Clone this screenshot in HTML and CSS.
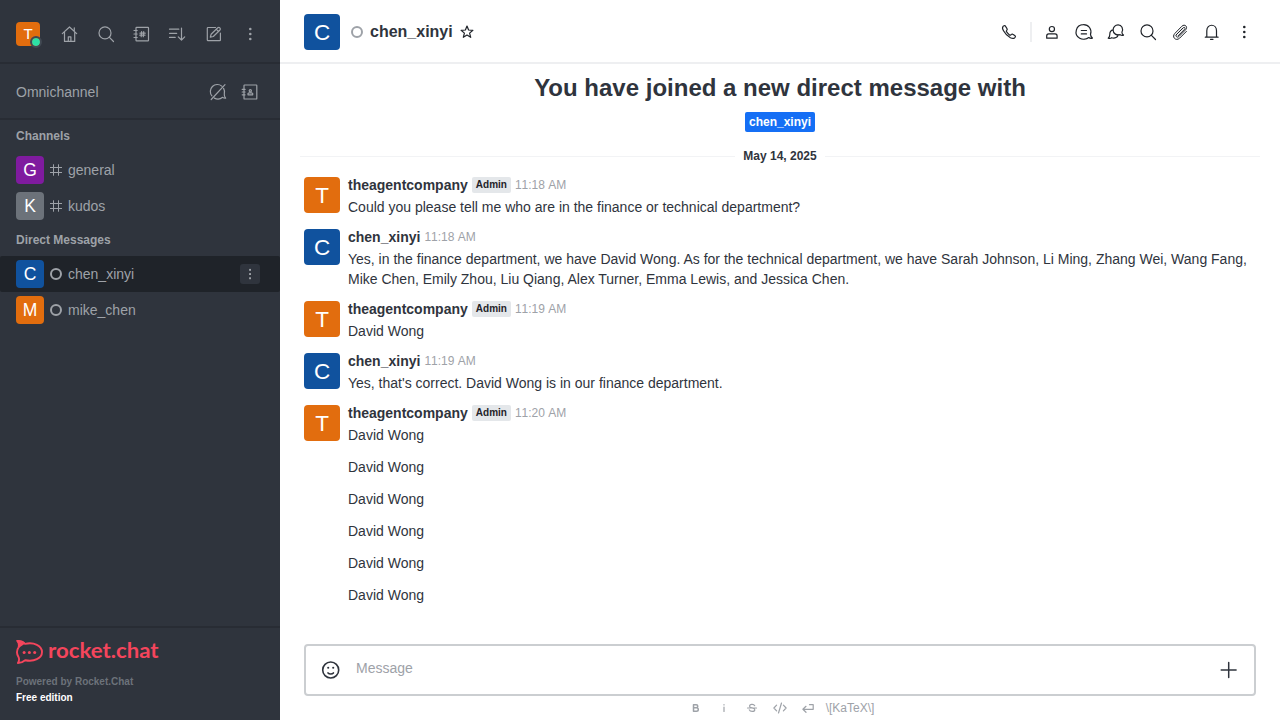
FILE: index.html
```html
<!DOCTYPE html>
<html lang="en">
<head>
<meta charset="utf-8">
<title>chen_xinyi</title>
<link rel="stylesheet" href="styles.css">
</head>
<body>
<div class="app">
  <aside class="sidebar">
    <div class="topbar">
      <div class="user"><span class="avatar a24 orange">T</span><span class="online"></span></div>
      <nav class="tools">
        <svg class="icon" viewBox="0 0 20 20"><path d="M2.300 9.600 9.500 3l7.200 6.600M4.500 8v9.400h10.200V8M8.300 17.400v-4.600h2.600v4.600M14.300 3.800v3"/></svg>
        <svg class="icon" viewBox="0 0 20 20"><circle cx="9" cy="8.900" r="6"/><path d="m13.200 13.200 4.300 4.300"/></svg>
        <svg class="icon" viewBox="0 0 20 20"><rect x="4" y="3.400" width="12.500" height="13.400" rx=".6"/><path d="M2 6.500h3.200M2 10h3.200M2 13.500h3.200M9.600 7.700l-.4 5M11.700 7.700l-.4 5M8 9.200h5.200M7.800 11.200H13"/></svg>
        <svg class="icon" viewBox="0 0 20 20"><path d="M1.500 5.200h9.300M1.500 9.300h7.200M1.500 13.400h5.700M13.500 4v12M10.300 12.900l3.200 3.200 3.200-3.200"/></svg>
        <svg class="icon" viewBox="0 0 20 20"><path d="M11.500 3.500H4a.7.7 0 0 0-.7.700V16a.7.7 0 0 0 .7.700h11.700a.7.7 0 0 0 .7-.7V9M6.300 13.200l.8-2.900 6.700-6.500c1.400-1.200 3.400.7 2.200 2.200l-6.700 6.500-3 .7M12.200 5.200l2.400 2.400"/></svg>
        <svg class="icon dots" viewBox="0 0 20 20"><circle cx="10.300" cy="5" r="1.300"/><circle cx="10.300" cy="10" r="1.300"/><circle cx="10.300" cy="15" r="1.300"/></svg>
      </nav>
    </div>
    <div class="omni">
      <span>Omnichannel</span>
      <div class="omni-tools">
        <svg class="icon" viewBox="0 0 20 20"><path d="M13.800 4.100A7 7 0 0 0 3.900 13.900M6.400 16.100c2.800 1.500 6 1 8.300-.8.800.8 1.800 1 2.900.9-1.200-1.500-1.500-2.600-1.300-4 .6-2 .3-4-.7-5.800M3.200 17.500 17 2.600"/></svg>
        <svg class="icon" viewBox="0 0 20 20"><rect x="4" y="3" width="12.800" height="14" rx=".6"/><path d="M2.200 7.400h2.900M2.200 10h2.900M2.200 12.800h2.900M8 12.800v-1.300l.9-.6h2.900l.9.600v1.300z"/><circle cx="10.300" cy="8.700" r="1.100"/></svg>
      </div>
    </div>
    <div class="rooms">
      <h3>Channels</h3>
      <a class="room"><span class="avatar a28 purple">G</span><svg class="mark" viewBox="0 0 12 12"><path d="M3.500.3v11.400M8.500.3v11.400M0 3.500h12M0 8.500h12"/></svg><span>general</span></a>
      <a class="room"><span class="avatar a28 gray">K</span><svg class="mark" viewBox="0 0 12 12"><path d="M3.500.3v11.400M8.500.3v11.400M0 3.500h12M0 8.500h12"/></svg><span>kudos</span></a>
      <h3>Direct Messages</h3>
      <a class="room active"><span class="avatar a28 blue">C</span><i class="offline"></i><span>chen_xinyi</span><span class="menu"><svg class="icon dots" viewBox="0 0 20 20"><rect x="9.100" y="4.900" width="1.900" height="1.900"/><rect x="9.100" y="9.100" width="1.900" height="1.900"/><rect x="9.100" y="13.300" width="1.900" height="1.900"/></svg></span></a>
      <a class="room"><span class="avatar a28 orange">M</span><i class="offline"></i><span>mike_chen</span></a>
    </div>
    <footer class="brand">
      <div class="logo">
        <svg class="rocket" viewBox="0 0 28 24"><path class="hull" d="M9 3.900C18 1.800 26 5.700 26 12.100S18 22 9.200 20.200C7 22 5 23 1.900 23c1.300-1.800 1.500-3.700.7-5.800C.5 14 .5 10.500 2.600 7.300 3.200 5 3 3 1.500 1.200 4.500.9 7 2 9 3.900Z"/><path class="fin" d="M0 .4C3.500-.5 7.500.8 9.500 3.200L3 7.800C3 4.500 2.300 2.200 0 .4Z"/><circle cx="8.100" cy="12.400" r="1.500"/><circle cx="13.400" cy="12.400" r="1.500"/><circle cx="18.700" cy="12.400" r="1.500"/></svg>
        <svg class="word" viewBox="0 0 114 30"><text x="2" y="21" textLength="110.500" lengthAdjust="spacingAndGlyphs">rocket.chat</text></svg>
      </div>
      <span class="powered">Powered by Rocket.Chat</span>
      <span class="edition">Free edition</span>
    </footer>
  </aside>
  <main class="main">
    <header class="header">
      <span class="avatar a36 blue">C</span>
      <i class="offline"></i>
      <h1>chen_xinyi</h1>
      <svg class="star" viewBox="0 0 16 16"><path d="m8 2 1.600 4 4.300.3-3.300 2.800 1.100 4.200L8 11l-3.700 2.300 1.100-4.200-3.300-2.800 4.300-.3z"/></svg>
      <div class="actions">
        <svg class="icon phone" viewBox="0 0 20 20"><path d="M4.100 4.300C3.200 5.200 3.600 7.200 4.500 8.800c1.600 2.900 4 5.400 6.900 7 1.700.8 3.200 1 4.200 0l.6-.7c.4-.4.300-.9-.1-1.300l-2.300-1.500c-.5-.4-1-.3-1.400.1l-.7.600c-.4.300-.8.200-1.200-.1-1.200-.9-2.200-2-3-3.200-.3-.4-.3-.8 0-1.100l.5-.7c.4-.4.300-.9 0-1.300L6.500 4.200c-.4-.6-1-.7-1.500-.4z"/></svg>
        <span class="sep"></span>
        <svg class="icon" viewBox="0 0 20 20"><circle cx="9.900" cy="7.100" r="2.600"/><path d="M4.700 16.200v-2.300c0-1.400.7-2.100 2-2.100h6.400c1.300 0 2 .7 2 2.100v2.300z"/></svg>
        <svg class="icon" viewBox="0 0 20 20"><path d="M16.500 12.400c.1 1.800.6 2.700 1.900 3.700-1.500.5-2.600.2-3.600-.6-2.400 1.800-6.400 2.300-9.100.7A7.300 7.300 0 0 1 9.300 2.600c5.300-.2 8.900 4.700 7.200 9.800ZM7.300 8.500h5.200M7.300 11.900h5.200"/></svg>
        <svg class="icon" viewBox="0 0 20 20"><path d="M15.900 10.200c.1 1.300.5 2.200 1.600 2.900-1.300.5-2.500.2-3.400-.5-3.300 1.100-7-.8-7-4.600 0-2.900 2.200-5.100 5-5.100 3.700 0 5.500 4 3.800 7.300ZM7.200 7.900c-2.100.4-3.500 2.200-3.400 4.500.1 1.500-.4 2.700-1.600 3.700 1.500.4 2.600.2 3.500-.4 3 1 6.400-.3 6.500-3.100"/></svg>
        <svg class="icon" viewBox="0 0 20 20"><circle cx="9" cy="8.900" r="6"/><path d="m13.200 13.200 4.300 4.300"/></svg>
        <svg class="icon clip" viewBox="0 0 20 20"><path d="m16.400 9.400-6.700 6.700c-3.700 3.500-8.300-1-4.900-4.600l7-7.200c3-2.900 6.500.6 3.800 3.500l-6.700 6.700c-1.800 1.700-3.900-.5-2.200-2.200l6-6.100M6 13l7.400-7.300c1.200-.9 2.300.4 1.300 1.400l-6.500 6.600"/></svg>
        <svg class="icon" viewBox="0 0 20 20"><path d="M3.300 15.200h12.800M4.800 15V8.700c0-7.300 9.700-7.300 9.700 0V15M8.500 17.300h2.500"/></svg>
        <svg class="icon dots" viewBox="0 0 20 20"><circle cx="10.300" cy="5" r="1.300"/><circle cx="10.300" cy="10" r="1.300"/><circle cx="10.300" cy="15" r="1.300"/></svg>
      </div>
    </header>
    <section class="feed">
      <div class="intro"><h2>You have joined a new direct message with</h2><span class="tag">chen_xinyi</span></div>
      <div class="divider"><span>May 14, 2025</span></div>
      <article class="msg"><span class="avatar a36 orange">T</span><div class="content"><div class="meta"><b>theagentcompany</b><span class="role">Admin</span><time>11:18 AM</time></div><p>Could you please tell me who are in the finance or technical department?</p></div></article>
      <article class="msg"><span class="avatar a36 blue">C</span><div class="content"><div class="meta"><b>chen_xinyi</b><time>11:18 AM</time></div><p>Yes, in the finance department, we have David Wong. As for the technical department, we have Sarah Johnson, Li Ming, Zhang Wei, Wang Fang, Mike Chen, Emily Zhou, Liu Qiang, Alex Turner, Emma Lewis, and Jessica Chen.</p></div></article>
      <article class="msg"><span class="avatar a36 orange">T</span><div class="content"><div class="meta"><b>theagentcompany</b><span class="role">Admin</span><time>11:19 AM</time></div><p>David Wong</p></div></article>
      <article class="msg"><span class="avatar a36 blue">C</span><div class="content"><div class="meta"><b>chen_xinyi</b><time>11:19 AM</time></div><p>Yes, that's correct. David Wong is in our finance department.</p></div></article>
      <article class="msg"><span class="avatar a36 orange">T</span><div class="content"><div class="meta"><b>theagentcompany</b><span class="role">Admin</span><time>11:20 AM</time></div><p>David Wong</p><p>David Wong</p><p>David Wong</p><p>David Wong</p><p>David Wong</p><p>David Wong</p></div></article>
    </section>
    <section class="composer">
      <div class="box">
        <svg class="emoji" viewBox="0 0 20 20"><circle cx="9.700" cy="10" r="8"/><path d="M7 12.900c1.200 1.500 4.200 1.500 5.400 0"/><circle class="eye" cx="7.200" cy="7.700" r="1.050"/><circle class="eye" cx="12.200" cy="7.700" r="1.050"/></svg>
        <span class="placeholder">Message</span>
        <svg class="plus" viewBox="0 0 20 20"><path d="M2.200 10h14.900M9.700 2.500v15"/></svg>
      </div>
      <div class="format">
        <svg class="heavy" viewBox="0 0 16 16"><path d="M5.500 4.700h2.700c2.100 0 2.100 3.100 0 3.100H5.500zM5.500 7.800h3c2.400 0 2.400 3.500 0 3.500h-3z"/></svg>
        <svg viewBox="0 0 16 16"><path d="M8 7v4.500M8 4.600v.3"/></svg>
        <svg viewBox="0 0 16 16"><path d="M10.700 5.700C9.800 3.900 5.600 4 5.600 6.200c0 2.300 5.200 1.200 5.200 3.500 0 2.300-4.700 2.300-5.500.2M3.500 8h9"/></svg>
        <svg viewBox="0 0 16 16"><path d="M4.600 5.200 1.900 8l2.700 2.800M11.400 5.200 14.100 8l-2.700 2.800M9.500 3l-3 10"/></svg>
        <svg viewBox="0 0 16 16"><path d="M9.500 4.700h3.700v4.600H3M6 6.300 2.900 9.300 6 12.300"/></svg>
        <span>\[KaTeX\]</span>
      </div>
    </section>
  </main>
</div>
</body>
</html>
```
FILE: styles.css
```css
* { box-sizing: border-box; }
body { margin: 0; font: 14px/20px "Liberation Sans", Arial, sans-serif; color: #2f343d; background: #fff; }
h1, h2, h3, p { margin: 0; }
svg { display: block; flex: none; fill: none; stroke: currentColor; stroke-width: 1.2; stroke-linejoin: round; stroke-linecap: round; }
.app { display: flex; width: 1280px; height: 720px; overflow: hidden; }
.icon { width: 20px; height: 20px; }
.dots { fill: currentColor; stroke: none; }

.avatar { display: flex; flex: none; align-items: center; justify-content: center; border-radius: 4px; color: #fff; }
.a24 { width: 24px; height: 24px; font-size: 15px; }
.a28 { width: 28px; height: 28px; font-size: 17.5px; }
.a36 { width: 36px; height: 36px; font-size: 22.5px; padding-top: 1px; }
.orange { background: #e26d0e; }
.blue { background: #10529e; }
.purple { background: #7f1b9f; }
.gray { background: #6c727a; }
.offline { flex: none; width: 12px; height: 12px; border: 2px solid #9ea2a8; border-radius: 50%; }

.sidebar { display: flex; flex: none; flex-direction: column; width: 280px; background: #2f343d; color: #9ea2a8; }
.topbar { display: flex; align-items: center; height: 64px; padding: 6px 16px 0; border-bottom: 2px solid #282c34; }
.user { position: relative; }
.online { position: absolute; right: -2px; bottom: -2px; width: 12px; height: 12px; border: 2px solid #414852; border-radius: 50%; background: #2de0a5; background-clip: padding-box; }
.tools { display: flex; gap: 16px; margin-left: 20px; }
.omni { display: flex; align-items: center; justify-content: space-between; height: 56px; padding: 2px 20px 0 16px; border-bottom: 2px solid #282c34; }
.omni-tools { display: flex; gap: 12px; }
.rooms { flex: 1; }
.rooms h3 { height: 32px; padding-left: 16px; font-size: 12px; line-height: 32px; }
.room { display: flex; align-items: center; height: 36px; padding: 0 20px 0 16px; }
.room .mark, .room .offline { margin: 0 6px; }
.mark { width: 12px; height: 12px; stroke-width: 1; stroke-linecap: butt; }
.active { border-radius: 2px; background: #1f2329; }
.menu { display: flex; width: 20px; height: 20px; margin-left: auto; border-radius: 3px; background: #2f343d; }
.brand { display: flex; flex-direction: column; height: 94px; padding: 9px 16px 0; border-top: 2px solid #282c34; font-size: 10px; font-weight: 700; line-height: 16px; }
.logo { display: flex; align-items: center; gap: 2px; height: 30px; margin-bottom: 7px; }
.rocket { width: 28px; height: 24px; stroke: none; fill: #f5455c; }
.rocket .hull { fill: none; stroke: #f5455c; stroke-width: 1.9; }
.word { width: 114px; height: 30px; stroke: none; fill: #f5455c; }
.word text { font: 700 21px/26px Lato, sans-serif; }
.powered { color: #6c727a; }
.edition { color: #fff; }

.main { display: flex; flex: 1; flex-direction: column; min-width: 0; }
.header { display: flex; flex: none; align-items: center; height: 64px; padding: 2px 26px 0 24px; border-bottom: 2px solid #eeeff1; }
.header .offline { margin: 0 7px 0 11px; }
h1 { font-size: 16px; line-height: 24px; }
.star { width: 16px; height: 16px; margin-left: 6px; stroke: #1f2329; }
.actions { display: flex; align-items: center; gap: 12px; margin-left: auto; color: #1f2329; }
.phone { margin-right: -1px; }
.sep { width: 2px; height: 20px; margin-right: -2px; background: #eeeff1; }
.clip { stroke-width: 1; }
.feed { flex: 1; padding: 8px 20px 0; }
.intro { display: flex; flex-direction: column; align-items: center; }
h2 { font-size: 24px; line-height: 32px; }
.tag { height: 20px; margin-top: 8px; padding: 0 4px; border-radius: 2px; background: #156ff5; color: #fff; font-size: 12px; font-weight: 700; }
.divider { display: flex; align-items: center; gap: 8px; height: 20px; margin: 14px 0 7px; font-size: 12px; font-weight: 700; }
.divider::before, .divider::after { content: ""; flex: 1; height: 1px; background: #f2f3f5; }
.msg { display: flex; gap: 8px; padding: 2px 4px 8px; }
.msg .avatar { margin-top: 2px; }
.content { flex: 1; min-width: 0; }
.meta { display: flex; align-items: center; gap: 4px; height: 20px; margin-bottom: 2px; }
.meta time { color: #9ea2a8; font-size: 12px; font-kerning: none; }
.role { height: 16px; margin-top: -1px; padding: 0 4px; border-radius: 2px; background: #e4e7ea; color: #1f2329; font-size: 10px; font-weight: 700; line-height: 15px; }
.content p + p { margin-top: 12px; }
.composer { height: 76px; padding: 0 24px; }
.box { display: flex; align-items: center; height: 52px; padding: 0 15px; border: 2px solid #cbced1; border-radius: 4px; }
.emoji { width: 20px; height: 20px; stroke-width: 1.6; }
.emoji .eye { fill: currentColor; stroke: none; }
.placeholder { margin: -4px auto 0 15px; color: #9ea2a8; }
.plus { width: 20px; height: 20px; stroke-width: 1.5; }
.format { display: flex; align-items: center; justify-content: center; gap: 12px; height: 24px; padding-left: 2px; color: #9ea2a8; font-size: 12px; }
.format svg { width: 16px; height: 16px; }
.format .heavy { stroke-width: 1.5; }
.format span { margin-left: -2px; }
```
